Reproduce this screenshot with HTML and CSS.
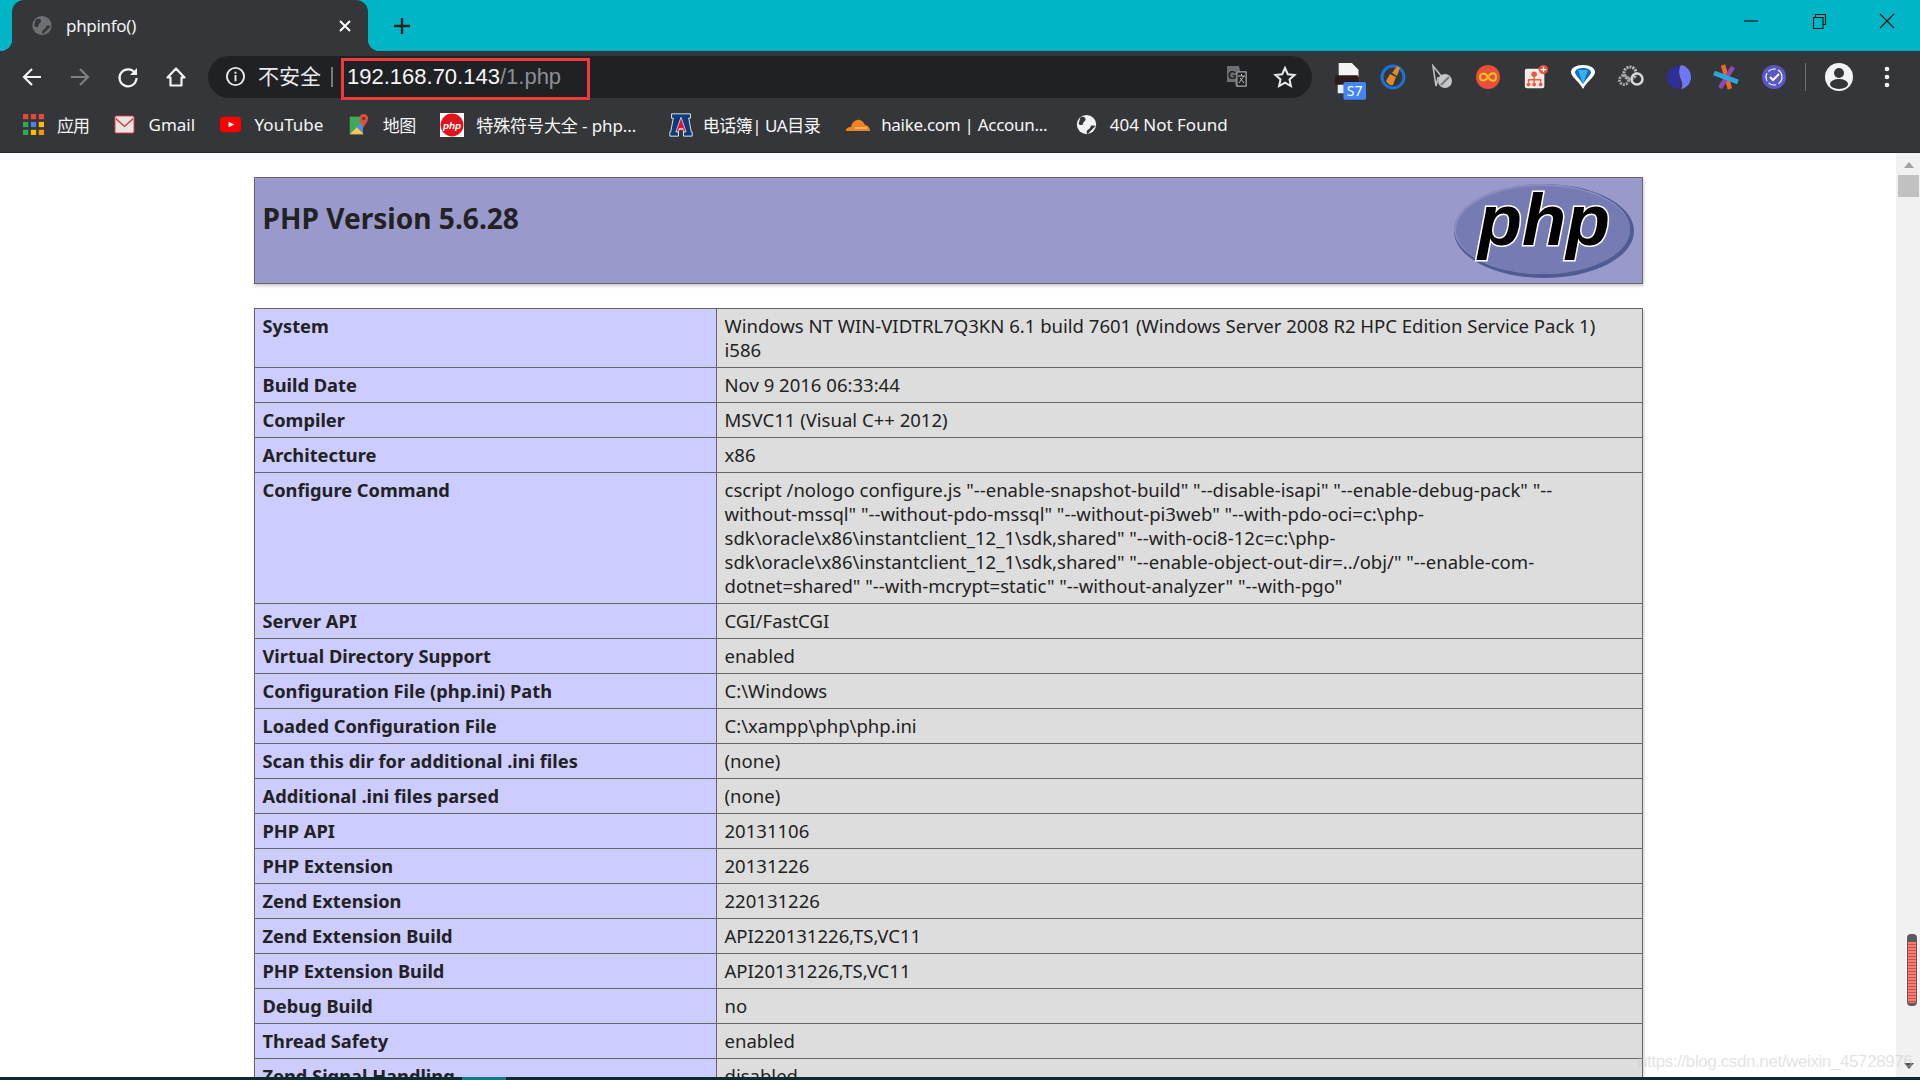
FILE: index.html
```html
<!DOCTYPE html>
<html lang="zh">
<head>
<meta charset="utf-8">
<title>phpinfo()</title>
<link rel="stylesheet" href="styles.css">
</head>
<body>
<div class="tabstrip">
  <div class="tab">
    <svg class="fav" viewBox="0 0 24 24"><circle cx="12" cy="12" r="11" fill="#6e7074"/><path d="M5 5c3-2 6 0 6 2s-3 2-3 5-4 2-5 0M13 22c-2-3 0-5 2-6s1-4 3-4 3 0 4 1" fill="#35363a"/></svg>
    <span class="tab-title">phpinfo()</span>
    <svg class="tab-x" viewBox="0 0 14 14"><path d="M2 2l10 10M12 2L2 12" stroke="#fff" stroke-width="2"/></svg>
  </div>
  <svg class="newtab" viewBox="0 0 18 18"><path d="M9 1v16M1 9h16" stroke="#222" stroke-width="2.4"/></svg>
  <div class="winctl">
    <svg viewBox="0 0 16 16"><path d="M1 8h14" stroke="#111" stroke-width="1.2"/></svg>
    <svg viewBox="0 0 16 16"><path d="M2.5 4.500h9.500v11h-9.500zM4.500 4.500v-3h10v10h-2.500" fill="none" stroke="#111" stroke-width="1.100"/></svg>
    <svg viewBox="0 0 16 16"><path d="M1 1l14 14M15 1L1 15" stroke="#111" stroke-width="1.100"/></svg>
  </div>
</div>

<div class="toolbar">
  <svg class="nav" viewBox="0 0 24 24"><path d="M21 12H4M12 4l-8 8 8 8" fill="none" stroke="#f1f3f4" stroke-width="2.200"/></svg>
  <svg class="nav" viewBox="0 0 24 24"><path d="M3 12h17M12 4l8 8-8 8" fill="none" stroke="#7d7f82" stroke-width="2.200"/></svg>
  <svg class="nav" viewBox="0 0 24 24"><path d="M19 8a8.500 8.500 0 1 0 1.500 5" fill="none" stroke="#f1f3f4" stroke-width="2.200"/><path d="M21 3v7h-7z" fill="#f1f3f4"/></svg>
  <svg class="nav" viewBox="0 0 24 24"><path d="M12 3.500L3.500 12.500H6.500V20.500h11v-8h3z" fill="none" stroke="#f1f3f4" stroke-width="2.200" stroke-linejoin="round"/></svg>
  <div class="omni">
    <svg class="info" viewBox="0 0 22 22"><circle cx="11" cy="11" r="9" fill="none" stroke="#e8eaed" stroke-width="2"/><path d="M10 9.500h2V16h-2zM10 6h2v2h-2z" fill="#e8eaed"/></svg>
    <span class="insecure">不安全</span>
    <span class="omni-sep"></span>
    <span class="url"><b>192.168.70.143</b>/1.php</span>
    <svg class="translate" viewBox="0 0 24 24"><path d="M2 1h12l1 5h7v16H11l-1-5H2z" fill="#6d6f72"/><path d="M12 7h9v14h-9z" fill="#202124" stroke="#a5a7a9"/><text x="3" y="14" class="t-g">G</text><path d="M13 11h7M16.500 9v2M14 18l5-7M15 13l4 5" stroke="#bbb" fill="none"/></svg>
    <svg class="star" viewBox="0 0 24 24"><path d="M12 3l2.800 6.200 6.700.7-5 4.500 1.400 6.600-5.900-3.400-5.900 3.400 1.400-6.600-5-4.500 6.700-.7z" fill="none" stroke="#e8eaed" stroke-width="2"/></svg>
  </div>
  <div class="exts">
    <span class="ext s7">
      <svg viewBox="0 0 34 40"><path d="M5 1h14l7 7v8H5z" fill="#f3f3f3"/><rect x="1" y="14" width="25" height="10" rx="2" fill="#2a1c1c"/><rect x="4" y="24" width="7" height="9" fill="#eee"/><rect x="10" y="21" width="24" height="19" rx="2" fill="#4285f4"/><text x="22" y="36" class="t-s7">S7</text></svg>
    </span>
    <span class="ext"><svg viewBox="0 0 26 26"><circle cx="13" cy="13" r="11" fill="#35363a" stroke="#1a73d9" stroke-width="3"/><path d="M6 17l4-7 6 3-3 8q-4 1-7-4zM12 9l5-7 3 2-3 8z" fill="#e0892f"/></svg></span>
    <span class="ext"><svg viewBox="0 0 26 26"><path d="M5 2l9 11-4 1-2 8z" fill="none" stroke="#bfc1c3" stroke-width="1.600"/><circle cx="17" cy="17" r="7" fill="#c4c6c8"/><path d="M13 21l8-8" stroke="#75777a" stroke-width="2"/></svg></span>
    <span class="ext"><svg viewBox="0 0 26 26"><circle cx="13" cy="13" r="12" fill="#e8503a"/><path d="M13 13c-3-5-8-4-8 0s5 5 8 0 8-5 8 0-5 5-8 0z" fill="none" stroke="#f6c21c" stroke-width="2"/></svg></span>
    <span class="ext"><svg viewBox="0 0 28 28"><rect x="2" y="5" width="21" height="21" rx="2" fill="#f2ebe8"/><circle cx="12" cy="11" r="3" fill="#ef5a3c"/><path d="M12 13v4M6 20v-3h13v3M12 17v3" fill="none" stroke="#ef5a3c" stroke-width="1.500"/><circle cx="6" cy="22" r="2" fill="#ef5a3c"/><circle cx="12" cy="22" r="2" fill="#ef5a3c"/><circle cx="19" cy="22" r="2" fill="#ef5a3c"/><circle cx="22" cy="6" r="5" fill="#e8503a"/><path d="M22 3v6M19 6h6" stroke="#fff" stroke-width="1.500"/></svg></span>
    <span class="ext"><svg viewBox="0 0 26 26"><path d="M13 25C9 17 1 13 1 8c0-4 5-7 12-7s12 3 12 7c0 5-8 9-12 17z" fill="#fff"/><path d="M13 20C10 15 5 11 5 8c1-3 4-4 8-4s7 1 8 4c0 3-5 7-8 12z" fill="#0b6bc4"/><path d="M13 20L8 6h10z" fill="#39b0ee"/></svg></span>
    <span class="ext"><svg viewBox="0 0 26 26"><circle cx="12" cy="9" r="6" fill="none" stroke="#bcbcbc" stroke-width="3" stroke-dasharray="2 1"/><circle cx="6" cy="16" r="4.500" fill="none" stroke="#a5a5a5" stroke-width="3" stroke-dasharray="2 1"/><circle cx="19" cy="15" r="5.500" fill="none" stroke="#d8d8d8" stroke-width="2.500"/></svg></span>
    <span class="ext"><svg viewBox="0 0 26 26"><path d="M14 1C6 3 1 8 1 14s5 11 12 11c5-7-4-13 1-24z" fill="#2f2f9c"/><path d="M15 1c6 1 10 6 10 12s-4 11-10 12c5-7-6-13 0-24z" fill="#6f78f2"/></svg></span>
    <span class="ext"><svg viewBox="0 0 26 26"><path d="M10 1l7 24" stroke="#ee6a24" stroke-width="4.500"/><path d="M20 3L7 24" stroke="#8d4bb0" stroke-width="4.500"/><path d="M1 9l24 9" stroke="#2aa6dc" stroke-width="5"/></svg></span>
    <span class="ext"><svg viewBox="0 0 26 26"><circle cx="13" cy="13" r="12" fill="#5a58c8"/><circle cx="13" cy="13" r="8" fill="none" stroke="#fff" stroke-width="1.200" stroke-dasharray="8 2.400"/><path d="M9 13l3 3 6-6" fill="none" stroke="#fff" stroke-width="2"/></svg></span>
    <span class="ext-sep"></span>
    <svg class="avatar" viewBox="0 0 28 28"><circle cx="14" cy="14" r="14" fill="#f1f3f4"/><circle cx="14" cy="10" r="5" fill="#35363a"/><ellipse cx="14" cy="21" rx="9" ry="5" fill="#35363a"/></svg>
    <svg class="dots" viewBox="0 0 6 22"><circle cx="3" cy="3" r="2.300" fill="#f1f3f4"/><circle cx="3" cy="11" r="2.300" fill="#f1f3f4"/><circle cx="3" cy="19" r="2.300" fill="#f1f3f4"/></svg>
  </div>
</div>

<div class="bookmarks">
  <a class="bm bm-apps"><svg viewBox="0 0 20 20"><rect x="0" y="0" width="5" height="5" fill="#e5493a"/><rect x="7.500" y="0" width="5" height="5" fill="#e5493a"/><rect x="15" y="0" width="5" height="5" fill="#e5493a"/><rect x="0" y="7.500" width="5" height="5" fill="#34a853"/><rect x="7.500" y="7.500" width="5" height="5" fill="#4285f4"/><rect x="15" y="7.500" width="5" height="5" fill="#fbbc05"/><rect x="0" y="15" width="5" height="5" fill="#34a853"/><rect x="7.500" y="15" width="5" height="5" fill="#fbbc05"/><rect x="15" y="15" width="5" height="5" fill="#f29900"/></svg>应用</a>
  <a class="bm"><svg viewBox="0 0 22 20"><rect x="1" y="1" width="20" height="18" rx="1.500" fill="#e9e4e2" stroke="#c33"/><path d="M2 3l9 8 9-8v2l-9 8-9-8z" fill="#d93a2e"/></svg>Gmail</a>
  <a class="bm"><svg viewBox="0 0 22 20"><rect x="0" y="2" width="22" height="16" rx="4" fill="#f00"/><path d="M9 7l6 3-6 3z" fill="#fff"/></svg>YouTube</a>
  <a class="bm bm-cjk"><svg viewBox="0 0 22 24"><path d="M1 3h15v20H1z" fill="#3fa95b"/><path d="M1 23l15-15v15z" fill="#4a8df0"/><path d="M1 23l8-8 8 8z" fill="#f6c945"/><path d="M17 0a5 5 0 0 1 5 5c0 4-5 8-5 11-1-3-5-7-5-11a5 5 0 0 1 5-5z" fill="#d8503f"/><circle cx="17" cy="5" r="2" fill="#8d2a20"/></svg>地图</a>
  <a class="bm bm-php"><svg class="wide-24" viewBox="0 0 23 23"><rect width="23" height="23" fill="#fff"/><circle cx="11.500" cy="11.500" r="11" fill="#e1131b"/><text x="11.500" y="15" class="t-php">php</text></svg>特殊符号大全 - php...</a>
  <a class="bm bm-a"><svg class="wide-24" viewBox="0 0 26 28"><path d="M2 1h22v5h-2l3 16h1v5H16v-5h1l-1-3h-6l-1 3h1v5H0v-5h1l3-16H2z" fill="#0c3a7a" stroke="#fff"/><path d="M13 5l6 17h-3l-1-4h-4l-1 4H7z" fill="#d4123c" stroke="#fff" stroke-width=".8"/></svg>电话簿| UA目录</a>
  <a class="bm bm-haike"><svg class="wide-26" viewBox="0 0 26 14"><path d="M1 13c0-3 2-4 5-4 1-5 5-8 9-7 3 1 4 3 5 5 3 0 5 3 5 6z" fill="#f48120"/><path d="M10 10h12" stroke="#fde3c8" stroke-width="1"/></svg>haike.com | Accoun...</a>
  <a class="bm bm-globe"><svg viewBox="0 0 24 24"><circle cx="12" cy="12" r="11" fill="#f1f3f4"/><path d="M5 4c3-2 6 0 6 2s-3 3-3 5-4 2-5 0M13 23c-2-3 0-5 2-6s1-4 3-4 3 0 4 1" fill="#35363a"/></svg>404 Not Found</a>
</div>

<div class="viewport">
  <main class="page">
    <div class="center">
      <header class="head">
        <h1>PHP Version 5.6.28</h1>
        <svg class="logo" viewBox="0 0 182 96">
          <ellipse cx="91" cy="48" rx="90" ry="47" fill="#4f5b93"/>
          <ellipse cx="89" cy="46" rx="88" ry="45" fill="#8a8dc0"/>
          <ellipse cx="90" cy="47" rx="87" ry="44" fill="#777bb3"/>
          <text x="91" y="62" class="t-logo">php</text>
        </svg>
      </header>
      <table class="info-table">
        <tr><th>System</th><td>Windows NT WIN-VIDTRL7Q3KN 6.1 build 7601 (Windows Server 2008 R2 HPC Edition Service Pack 1) i586</td></tr>
        <tr><th>Build Date</th><td>Nov 9 2016 06:33:44</td></tr>
        <tr><th>Compiler</th><td>MSVC11 (Visual C++ 2012)</td></tr>
        <tr><th>Architecture</th><td>x86</td></tr>
        <tr><th>Configure Command</th><td>cscript /nologo configure.js "--enable-snapshot-build" "--disable-isapi" "--enable-debug-pack" "--without-mssql" "--without-pdo-mssql" "--without-pi3web" "--with-pdo-oci=c:\php-sdk\oracle\x86\instantclient_12_1\sdk,shared" "--with-oci8-12c=c:\php-sdk\oracle\x86\instantclient_12_1\sdk,shared" "--enable-object-out-dir=../obj/" "--enable-com-dotnet=shared" "--with-mcrypt=static" "--without-analyzer" "--with-pgo"</td></tr>
        <tr><th>Server API</th><td>CGI/FastCGI</td></tr>
        <tr><th>Virtual Directory Support</th><td>enabled</td></tr>
        <tr><th>Configuration File (php.ini) Path</th><td>C:\Windows</td></tr>
        <tr><th>Loaded Configuration File</th><td>C:\xampp\php\php.ini</td></tr>
        <tr><th>Scan this dir for additional .ini files</th><td>(none)</td></tr>
        <tr><th>Additional .ini files parsed</th><td>(none)</td></tr>
        <tr><th>PHP API</th><td>20131106</td></tr>
        <tr><th>PHP Extension</th><td>20131226</td></tr>
        <tr><th>Zend Extension</th><td>220131226</td></tr>
        <tr><th>Zend Extension Build</th><td>API220131226,TS,VC11</td></tr>
        <tr><th>PHP Extension Build</th><td>API20131226,TS,VC11</td></tr>
        <tr><th>Debug Build</th><td>no</td></tr>
        <tr><th>Thread Safety</th><td>enabled</td></tr>
        <tr><th>Zend Signal Handling</th><td>disabled</td></tr>
      </table>
    </div>
  </main>
  <div class="scrollbar">
    <span class="arrow-up"></span>
    <span class="thumb"></span>
    <span class="arrow-down"></span>
  </div>
  <span class="marker"></span>
  <span class="watermark">https://blog.csdn.net/weixin_45728976</span>
</div>
<div class="bottom"><span class="bottom-tab"></span></div>
</body>
</html>
```
FILE: styles.css
```css
* { box-sizing: border-box; }
html, body { margin: 0; height: 100%; overflow: hidden; }
body { display: flex; flex-direction: column; height: 1080px; background: #fff; font-family: "Noto Sans", "Noto Sans CJK SC", sans-serif; color: #222; }

.tabstrip { height: 51px; background: #00b6c6; display: flex; align-items: flex-end; padding-left: 12px; flex: none; }
.tab { width: 356px; height: 51px; background: #35363a; border-radius: 12px 12px 0 0; display: flex; align-items: center; padding-left: 19px; position: relative; }
.tab::before, .tab::after { content: ""; position: absolute; bottom: 0; width: 12px; height: 12px; }
.tab::before { left: -12px; background: radial-gradient(circle at 0 0, transparent 12px, #35363a 12.5px); }
.tab::after { right: -12px; background: radial-gradient(circle at 100% 0, transparent 12px, #35363a 12.5px); }
.fav { width: 22px; height: 21px; }
.tab-title { margin-left: 13px; font-size: 17px; color: #f1f3f4; letter-spacing: -0.3px; }
.tab-x { width: 14px; height: 14px; margin-left: auto; margin-right: 16px; }
.newtab { width: 18px; height: 18px; margin: 0 0 16px 25px; }
.winctl { margin-left: auto; align-self: flex-start; display: flex; gap: 52px; padding: 13px 25px 0 0; }
.winctl svg { width: 16px; height: 16px; }

.toolbar { height: 51px; background: #35363a; display: flex; align-items: center; padding-left: 20px; flex: none; }
.nav { width: 24px; height: 24px; margin-right: 24px; flex: none; }
.omni { width: 1104px; height: 42px; margin-left: -4px; background: #202124; border-radius: 21px; display: flex; align-items: center; padding-left: 17px; position: relative; }
.info { width: 21px; height: 21px; flex: none; }
.insecure { margin-left: 12px; font-size: 21px; line-height: 28px; margin-top: -2px; color: #e8eaed; white-space: nowrap; }
.omni-sep { width: 2px; height: 20px; background: #77797c; margin-left: 10px; }
.url { margin-left: 14px; font: 22px "Liberation Sans", sans-serif; color: #8d8f92; padding: 0; }
.url b { font-weight: 400; color: #f6f7f8; }
.url::before { content: ""; position: absolute; left: 133px; top: 2px; width: 243px; height: 36px; border: 3px solid #f03a3a; }
.translate { width: 24px; height: 24px; margin-left: auto; }
.star { width: 24px; height: 24px; margin: 0 15px 0 24px; }
.exts { display: flex; align-items: center; margin-left: 22px; }
.ext { width: 26px; height: 26px; margin-right: 21.600px; flex: none; display: block; }
.ext svg { width: 26px; height: 26px; display: block; }
.ext.s7 { margin-right: 20px; }
.ext.s7 svg { width: 32px; height: 38px; margin-top: -2px; }
.ext-sep { width: 1px; height: 28px; background: #6b6d70; margin: 0 18.500px 0 -3px; }
.avatar { width: 28px; height: 28px; }
.dots { width: 6px; height: 22px; margin-left: 31px; }
.t-g { font: bold 11px "Liberation Sans", sans-serif; fill: #202124; }
.t-s7 { font: 15px "Noto Sans", sans-serif; fill: #fff; text-anchor: middle; }
.t-php { font: italic bold 9.500px "Liberation Sans", sans-serif; fill: #fff; text-anchor: middle; }

.bookmarks { height: 51px; background: #35363a; display: flex; align-items: center; padding: 0 0 5px 23px; gap: 24.500px; flex: none; border-bottom: 1px solid #2a2b2e; font-size: 17px; color: #f6f6f6; }
.bm { display: flex; align-items: center; gap: 14px; white-space: nowrap; letter-spacing: 0; }
.bm svg { width: 21px; height: 21px; flex: none; }
.bm svg.wide-24 { width: 24px; height: 24px; }
.bm svg.wide-26 { width: 26px; height: 14px; }
.bm-cjk { letter-spacing: -0.5px; }
.bm-apps { gap: 13px; letter-spacing: -1px; }
.bm-php { gap: 12px; letter-spacing: -0.1px; }
.bm-a { margin-left: 8px; gap: 10px; letter-spacing: -0.5px; }
.bm-haike { gap: 10.500px; letter-spacing: -0.3px; }
.bm-globe { margin-left: 4px; gap: 13px; }

.viewport { flex: 1; min-height: 0; display: flex; position: relative; overflow: hidden; }
.page { flex: 1; min-width: 0; overflow: hidden; background: #fff; }
.center { width: 1389px; margin: 0 auto; padding-top: 24px; }
.head { height: 107px; background: #99c; border: 1px solid #666; box-shadow: 1px 2px 3px #ccc; display: flex; justify-content: space-between; align-items: flex-start; padding: 5px 7px 0 8px; margin-bottom: 24px; }
h1 { margin: 17px 0 0; font-size: 28.100px; font-weight: 700; line-height: 36px; color: #222; }
.logo { width: 182px; height: 96px; flex: none; }
.t-logo { font: italic bold 72px "Liberation Sans", sans-serif; fill: #000; stroke: #fff; stroke-width: 3px; paint-order: stroke; text-anchor: middle; }

.info-table { width: 1389px; border-collapse: collapse; table-layout: fixed; box-shadow: 1px 2px 3px #ccc; line-height: 24px; }
.info-table th, .info-table td { border: 1px solid #666; padding: 5px 7px 5px 8px; vertical-align: baseline; text-align: left; color: #222; }
.info-table th { width: 462px; background: #ccf; font-size: 18.250px; font-weight: 700; }
.info-table td { background: #ddd; font-size: 18.550px; padding-right: 29px; }

.scrollbar { width: 24px; flex: none; background: #f1f1f1; position: relative; display: flex; flex-direction: column; align-items: center; padding: 0 0 0 1px; }
.arrow-up { width: 0; height: 0; margin-top: 9px; border: 5px solid transparent; border-top: 0; border-bottom: 6px solid #a3a3a3; }
.thumb { width: 21px; height: 22px; margin-top: 7px; background: #c1c1c1; }
.arrow-down { width: 0; height: 0; margin-top: auto; margin-bottom: 8px; border: 5px solid transparent; border-bottom: 0; border-top: 6px solid #505050; }
.marker { position: absolute; left: 1907px; top: 781px; width: 10px; height: 72px; border-radius: 4px; background: repeating-linear-gradient(#fb7a72 0 2px, #c9524e 2px 3px); border: 2px solid #5c5c5c; border-width: 8px 1px 3px; }
.watermark { position: absolute; left: 1638px; top: 900px; font: 17px/18px "Liberation Sans", sans-serif; letter-spacing: -0.4px; color: rgba(200,200,200,.5); white-space: nowrap; }
.bottom { height: 3px; flex: none; background: #0d2b2f; position: relative; }
.bottom-tab { position: absolute; left: 462px; top: 0; width: 44px; height: 3px; background: #0d7d88; }
```
